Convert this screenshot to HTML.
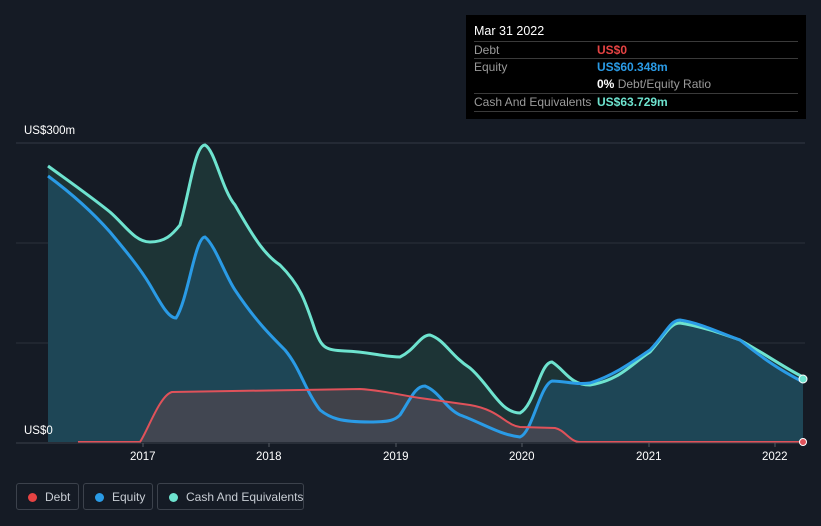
<!DOCTYPE html>
<html><head><style>
body{margin:0;background:#151b25;font-family:"Liberation Sans",sans-serif;width:821px;height:526px;overflow:hidden;position:relative}
.tt{position:absolute;left:466px;top:15px;width:340px;height:104px;background:#000;color:#fff;font-size:12px}
.tt .h{position:absolute;left:8px;top:9px;font-size:12.5px}
.row{position:absolute;left:8px;width:324px;border-top:1px solid #3a3a3a;height:16px;line-height:16px}
.row .l{position:absolute;left:0;color:#9a9a9a}
.row .v{position:absolute;left:123px;font-weight:bold}
.leg{position:absolute;top:483px;height:27px;border:1px solid #3c424c;border-radius:3px;color:#c8cdd4;font-size:12px;line-height:26px;box-sizing:border-box;white-space:nowrap}
.leg i{position:absolute;left:11px;top:9px;width:9px;height:9px;border-radius:50%}
.ax{position:absolute;color:#fff;font-size:11.5px}
</style></head><body>
<svg width="821" height="526" style="position:absolute;left:0;top:0">
<line x1="16" y1="143" x2="805" y2="143" stroke="#333a45"/>
<line x1="16" y1="243" x2="805" y2="243" stroke="#2a303a"/>
<line x1="16" y1="343" x2="805" y2="343" stroke="#2a303a"/>
<path d="M48,166 C70,182 90,196 110,212 C125,225 135,242 150,242 C165,242 172,235 180,225 C190,190 195,145 205,145 C215,150 222,190 235,205 C255,240 265,255 280,265 C300,285 305,300 315,330 C322,348 325,350 345,351 C370,352 385,357 400,357 C415,350 420,335 430,335 C445,340 450,355 470,368 C490,385 500,413 520,413 C535,405 540,362 552,362 C565,370 570,385 590,385 C620,380 630,365 650,352 C665,335 670,323 680,323 C700,326 720,333 740,340 C770,357 785,368 803,377 L803,442 L48,442 Z" fill="#1d3436" />
<path d="M48,176 C75,196 95,215 110,232 C125,250 140,268 150,285 C160,302 168,318 176,318 C188,300 195,237 205,237 C215,245 225,275 235,290 C255,320 270,335 285,350 C300,368 305,390 320,410 C330,418 340,422 370,422 C390,422 395,420 400,415 C410,400 415,386 425,386 C440,392 445,408 460,415 C480,422 500,435 520,437 C532,433 540,385 552,381 C565,381 575,385 590,383 C615,375 635,360 650,350 C665,335 670,320 680,320 C700,323 720,333 740,340 C765,360 780,370 803,382 L803,442 L48,442 Z" fill="#1f4a5c" opacity="0.85"/>
<path d="M78,442 L140,442 C148,430 160,395 172,392 L360,389 C380,390 400,395 420,398 L470,405 C500,410 505,425 520,427 L555,428 C565,430 570,442 580,442 L803,442 Z" fill="#4a4650" opacity="0.8"/>
<path d="M48,166 C70,182 90,196 110,212 C125,225 135,242 150,242 C165,242 172,235 180,225 C190,190 195,145 205,145 C215,150 222,190 235,205 C255,240 265,255 280,265 C300,285 305,300 315,330 C322,348 325,350 345,351 C370,352 385,357 400,357 C415,350 420,335 430,335 C445,340 450,355 470,368 C490,385 500,413 520,413 C535,405 540,362 552,362 C565,370 570,385 590,385 C620,380 630,365 650,352 C665,335 670,323 680,323 C700,326 720,333 740,340 C770,357 785,368 803,377" fill="none" stroke="#6ee3cf" stroke-width="3"/>
<path d="M48,176 C75,196 95,215 110,232 C125,250 140,268 150,285 C160,302 168,318 176,318 C188,300 195,237 205,237 C215,245 225,275 235,290 C255,320 270,335 285,350 C300,368 305,390 320,410 C330,418 340,422 370,422 C390,422 395,420 400,415 C410,400 415,386 425,386 C440,392 445,408 460,415 C480,422 500,435 520,437 C532,433 540,385 552,381 C565,381 575,385 590,383 C615,375 635,360 650,350 C665,335 670,320 680,320 C700,323 720,333 740,340 C765,360 780,370 803,382" fill="none" stroke="#2a9be6" stroke-width="3"/>
<path d="M78,442 L140,442 C148,430 160,395 172,392 L360,389 C380,390 400,395 420,398 L470,405 C500,410 505,425 520,427 L555,428 C565,430 570,442 580,442 L803,442" fill="none" stroke="#e0525a" stroke-width="2"/>
<line x1="16" y1="443" x2="805" y2="443" stroke="#3a404a"/>
<g stroke="#555b64"><line x1="143" y1="443" x2="143" y2="447"/><line x1="269" y1="443" x2="269" y2="447"/><line x1="396" y1="443" x2="396" y2="447"/><line x1="522" y1="443" x2="522" y2="447"/><line x1="649" y1="443" x2="649" y2="447"/><line x1="775" y1="443" x2="775" y2="447"/></g>
<circle cx="803" cy="379" r="4" fill="#6ee3cf" stroke="#fff" stroke-width="1"/>
<circle cx="803" cy="442" r="3.5" fill="#e0525a" stroke="#fff" stroke-width="1"/>
</svg>
<div class="ax" style="left:24px;top:125px">US$300m</div>
<div class="ax" style="left:24px;top:425px">US$0</div>
<div class="ax" style="left:130px;top:451px">2017</div>
<div class="ax" style="left:256px;top:451px">2018</div>
<div class="ax" style="left:383px;top:451px">2019</div>
<div class="ax" style="left:509px;top:451px">2020</div>
<div class="ax" style="left:636px;top:451px">2021</div>
<div class="ax" style="left:762px;top:451px">2022</div>
<div class="tt"><div class="h">Mar 31 2022</div>
<div class="row" style="top:26px;height:17px;line-height:17px"><span class="l">Debt</span><span class="v" style="color:#e64343">US$0</span></div>
<div class="row" style="top:43px;height:17px;line-height:17px"><span class="l">Equity</span><span class="v" style="color:#2a9be6">US$60.348m</span></div>
<div style="position:absolute;left:131px;top:61px;line-height:17px"><b>0%</b> <span style="color:#9a9a9a">Debt/Equity Ratio</span></div>
<div class="row" style="top:78px;height:17px;line-height:17px"><span class="l">Cash And Equivalents</span><span class="v" style="color:#6ee3cf">US$63.729m</span></div>
<div class="row" style="top:96px;height:0"></div>
</div>
<div class="leg" style="left:16px;width:63px"><i style="background:#e64343"></i><span style="position:absolute;left:28px">Debt</span></div>
<div class="leg" style="left:83px;width:70px"><i style="background:#2a9be6"></i><span style="position:absolute;left:28px">Equity</span></div>
<div class="leg" style="left:157px;width:147px"><i style="background:#6ee3cf"></i><span style="position:absolute;left:28px">Cash And Equivalents</span></div>
</body></html>
